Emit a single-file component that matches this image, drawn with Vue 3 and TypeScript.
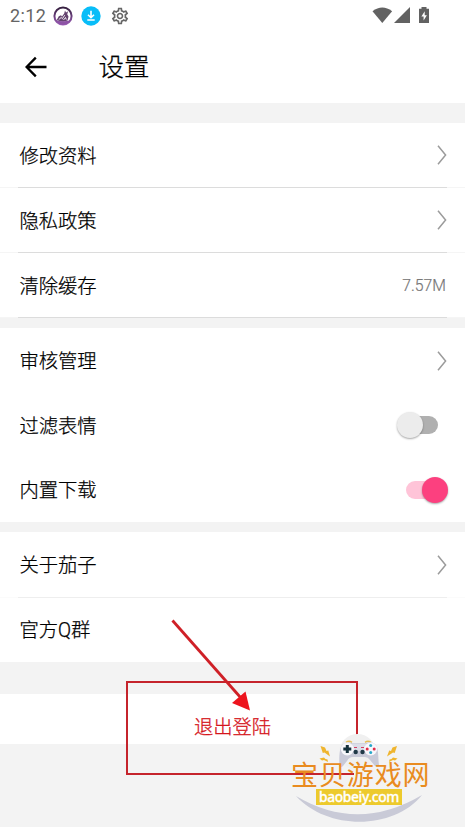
<script setup lang="ts">
import { ref } from 'vue'

interface Row {
  label: string
  kind: 'link' | 'value' | 'switch' | 'plain'
  value?: string
  on?: boolean
}
interface Group {
  name: string
  rows: Row[]
}

const groups = ref<Group[]>([
  {
    name: 'profile',
    rows: [
      { label: '修改资料', kind: 'link' },
      { label: '隐私政策', kind: 'link' },
      { label: '清除缓存', kind: 'value', value: '7.57M' },
    ],
  },
  {
    name: 'tools',
    rows: [
      { label: '审核管理', kind: 'link' },
      { label: '过滤表情', kind: 'switch', on: false },
      { label: '内置下载', kind: 'switch', on: true },
    ],
  },
  {
    name: 'about',
    rows: [
      { label: '关于茄子', kind: 'link' },
      { label: '官方Q群', kind: 'plain' },
    ],
  },
])

function toggle(row: Row) {
  if (row.kind === 'switch') row.on = !row.on
}
</script>

<template>
  <div class="screen">
    <div class="status">
      <span class="clock">2:12</span>
      <svg class="app-icon" width="20" height="20" viewBox="0 0 20 20">
        <defs>
          <linearGradient id="ring" x1="0" y1="0" x2="0" y2="1">
            <stop offset="0" stop-color="#35203f" />
            <stop offset="1" stop-color="#9a5bb5" />
          </linearGradient>
        </defs>
        <circle cx="10" cy="10" r="8.6" fill="#fff" stroke="url(#ring)" stroke-width="2" />
        <path d="M3.6 14.2 5.8 10.2 8 9.2 9 10.5 11.2 7.5 12 4.5 13 6.5 15.2 5.3 14.2 8.2 15.5 10.5 14.6 14.5 10 15.8Z" fill="#64436f" />
        <path d="m5.8 13.5 2.4-2 1.2 1.2 2.3-3.5M10.5 14l2-2.5.8 2" fill="none" stroke="#fff" stroke-width=".9" />
        <path d="M3 14.500Q10 16 17 14.500Q14 18.800 10 18.800T3 14.500Z" fill="#8d53a5" />
      </svg>
      <svg class="dl-icon" width="20" height="20" viewBox="0 0 20 20">
        <circle cx="10" cy="10" r="9.7" fill="#08bdf8" />
        <path d="M10 4.8v6.6M7 8.7l3 3 3-3M6.3 14h7.4" fill="none" stroke="#fff" stroke-width="1.6" />
      </svg>
      <svg class="gear-icon" width="20" height="20" viewBox="0 0 24 24" fill="#666">
        <path d="M19.43 12.98c.04-.32.07-.64.07-.98 0-.34-.03-.66-.07-.98l2.11-1.65c.19-.15.24-.42.12-.64l-2-3.46c-.09-.16-.26-.25-.44-.25-.06 0-.12.01-.17.03l-2.49 1c-.52-.4-1.08-.73-1.69-.98l-.38-2.65C14.46 2.18 14.25 2 14 2h-4c-.25 0-.46.18-.49.42l-.38 2.65c-.61.25-1.17.59-1.69.98l-2.49-1c-.06-.02-.12-.03-.18-.03-.17 0-.34.09-.43.25l-2 3.46c-.13.22-.07.49.12.64l2.11 1.65c-.04.32-.07.65-.07.98 0 .33.03.66.07.98l-2.11 1.65c-.19.15-.24.42-.12.64l2 3.46c.09.16.26.25.44.25.06 0 .12-.01.17-.03l2.49-1c.52.4 1.08.73 1.69.98l.38 2.65c.03.24.24.42.49.42h4c.25 0 .46-.18.49-.42l.38-2.65c.61-.25 1.17-.59 1.69-.98l2.49 1c.06.02.12.03.18.03.17 0 .34-.09.43-.25l2-3.46c.12-.22.07-.49-.12-.64l-2.11-1.65zm-1.98-1.71c.04.31.05.52.05.73 0 .21-.02.43-.05.73l-.14 1.13.89.7 1.08.84-.7 1.21-1.27-.51-1.04-.42-.9.68c-.43.32-.84.56-1.25.73l-1.06.43-.16 1.13-.2 1.35h-1.4l-.19-1.35-.16-1.13-1.06-.43c-.43-.18-.83-.41-1.23-.71l-.91-.7-1.06.43-1.27.51-.7-1.21 1.08-.84.89-.7-.14-1.13c-.03-.31-.05-.54-.05-.74s.02-.43.05-.73l.14-1.13-.89-.7-1.08-.84.7-1.21 1.27.51 1.04.42.9-.68c.43-.32.84-.56 1.25-.73l1.06-.43.16-1.13.2-1.35h1.39l.19 1.35.16 1.13 1.06.43c.43.18.83.41 1.23.71l.91.7 1.06-.43 1.27-.51.7 1.21-1.07.85-.89.7.14 1.13zM12 8c-2.21 0-4 1.79-4 4s1.79 4 4 4 4-1.79 4-4-1.79-4-4-4zm0 6c-1.1 0-2-.9-2-2s.9-2 2-2 2 .9 2 2-.9 2-2 2z" />
      </svg>
      <svg class="signal" width="60" height="18" viewBox="0 0 60 18">
        <path d="M.5 4.2Q10.300-3.300 20.100 4.200L10.300 16Z" fill="#626262" />
        <path d="M38 0v16H22Z" fill="#626262" />
        <path d="M49.500 0h5v1.700H57V16H47V1.700h2.500Z" fill="#626262" />
        <path d="m52.700 4.200-3.300 5.300h2.200v4l3.300-5.300h-2.200Z" fill="#fff" />
      </svg>
    </div>

    <header class="bar">
      <svg class="back" width="22" height="22" viewBox="0 0 22 22">
        <path d="M21.500 11H2M10.800 1.600 1.600 11l9.200 9.400" fill="none" stroke="#000" stroke-width="2.300" />
      </svg>
      <h1 class="title">设置</h1>
    </header>

    <main>
      <section v-for="g in groups" :key="g.name" class="group" :class="g.name">
        <div v-for="row in g.rows" :key="row.label" class="row" @click="toggle(row)">
          <span class="label">{{ row.label }}</span>
          <svg v-if="row.kind === 'link'" class="chevron" width="10" height="20" viewBox="0 0 10 20">
            <path d="M1 .8 8.600 10 1 19.200" fill="none" stroke="#9b9b9b" stroke-width="1.500" />
          </svg>
          <span v-else-if="row.kind === 'value'" class="value">{{ row.value }}</span>
          <span v-else-if="row.kind === 'switch'" class="switch" :class="{ on: row.on }">
            <span class="knob"></span>
          </span>
        </div>
      </section>
      <button class="logout" type="button">退出登陆</button>
    </main>

    <svg class="marks" width="465" height="827" viewBox="0 0 465 827">
      <path d="M357 736V682H127V774H354" fill="none" stroke="#c5242c" stroke-width="2" />
      <path d="M172.500 620.500 241 698" stroke="#cf2027" stroke-width="2.800" />
      <path d="m250 710.500-18-7.500 13.500-11.500Z" fill="#ed141d" />
    </svg>

    <div class="brand">
      <svg class="art" width="150" height="102" viewBox="280 725 150 102">
        <path d="M296 796Q358 833 422 795C394 830 328 831 296 796Z" fill="#c9cad7" />
        <circle cx="357.500" cy="752" r="18" fill="#f0f0f0" />
        <path d="M346 742.300q3-2 6 0M365 742.300q3-2 6 0" fill="none" stroke="#e6bd55" stroke-width="1.500" />
        <path d="M343 744q5-3 9-1h14q5-2 9 1c4 3 3 15 4 21q-1 3-4 1l-5-6q-2-3-5-3h-12q-4 0-6 4l-4 5q-2 2-3.500 0c-.5-6-.5-19 3.500-22Z" fill="#c9cad8" />
        <path d="M352 743.500h14l-1 7.500h-12Z" fill="#dcdde8" />
        <circle cx="347.300" cy="749" r="6.500" fill="#f7f7fb" />
        <circle cx="370.700" cy="749" r="6.500" fill="#f7f7fb" />
        <path d="M347.300 745v8M343.300 749h8" stroke="#16313c" stroke-width="3" />
        <circle cx="370.700" cy="745.500" r="1.500" fill="#28a8ca" />
        <circle cx="370.700" cy="752.500" r="1.500" fill="#28a8ca" />
        <circle cx="367.200" cy="749" r="1.500" fill="#e22b48" />
        <circle cx="374.200" cy="749" r="1.500" fill="#e22b48" />
        <path d="M354 747.500h3M361 747.500h3" stroke="#cf4166" stroke-width="1.200" />
        <circle cx="355.700" cy="752" r="2.200" fill="#203847" />
        <circle cx="362.500" cy="752" r="2.200" fill="#203847" />
        <g fill="#efb52e">
          <path d="m320.500 746 4.500 1.500 1.500 3.500 1.800-.5 1.700 6-5.500-4-1.700.4Z" />
          <path d="m397 746-4.500 1.500-1.500 3.500-1.800-.5-2.200 6 6-4 1.700.4Z" />
          <path d="m319.500 758.500 4.500-1 1.500 1.500 2 .5.500 2.500-4-2-2 .5Z" />
          <path d="m397.500 758.500-4.500-1-1.500 1.500-2 .5-.5 2.500 4-2 2 .5Z" />
        </g>
      </svg>
      <span class="brand-name">宝贝游戏网</span>
      <span class="brand-url">baobeiy.com</span>
    </div>
  </div>
</template>

<style>
body {
  margin: 0;
  background: #f3f3f3;
}
</style>

<style scoped>
.screen {
  position: relative;
  width: 465px;
  height: 827px;
  overflow: hidden;
  background: #f3f3f3;
  color: #000;
  font-family: Roboto, 'Noto Sans CJK SC', sans-serif;
}
.status {
  box-sizing: border-box;
  display: flex;
  align-items: center;
  height: 31px;
  padding: 0 35px 0 10px;
  background: #fff;
}
.clock {
  width: 43px;
  color: #656565;
  font-size: 18px;
  letter-spacing: 0.4px;
  line-height: 31px;
}
.dl-icon {
  margin-left: 8px;
}
.gear-icon {
  margin-left: 9px;
}
.signal {
  margin-left: auto;
  margin-right: -2px;
}
.bar {
  display: flex;
  align-items: center;
  height: 72px;
  padding-left: 25px;
  background: #fff;
}
.title {
  margin: 0 0 0 51.500px;
  font-size: 25.500px;
  font-weight: 300;
  line-height: 72px;
  -webkit-text-stroke: 0.250px #000;
}
.group {
  background: #fff;
}
.profile {
  margin-top: 20px;
}
.tools,
.about {
  margin-top: 10px;
}
.row {
  box-sizing: border-box;
  display: flex;
  align-items: center;
  justify-content: space-between;
  height: 65px;
  padding: 0 18.500px 0 19.500px;
}
.profile .row {
  border-bottom: 1px solid;
  border-image: linear-gradient(90deg, #f5f5f5 19px, #dcdcdc 19px, #dcdcdc 446px, #f5f5f5 446px) 1;
}
.tools .row:last-child,
.about .row:last-child {
  height: 64px;
}
.about .row:first-child {
  height: 66px;
  border-bottom: 1px solid;
  border-image: linear-gradient(90deg, #fbfbfb 19px, #eee 19px, #eee 446px, #fbfbfb 446px) 1;
}
.label {
  padding-top: 3px;
  font-size: 19.300px;
  font-weight: 300;
  line-height: 28px;
  -webkit-text-stroke: 0.250px #000;
}
.tools .label,
.about .label {
  padding-top: 2px;
}
.value {
  padding-top: 1px;
  margin-right: 0.500px;
  color: #777;
  font-size: 15.800px;
  font-weight: 300;
  -webkit-text-stroke: 0.200px #777;
}
.switch {
  position: relative;
  top: -1px;
  width: 36px;
  height: 18px;
  margin-right: 9px;
  border-radius: 9px;
  background: #b0b0b0;
}
.knob {
  position: absolute;
  top: -4px;
  left: -5px;
  width: 26px;
  height: 26px;
  border-radius: 50%;
  background: #ececec;
  box-shadow: 0 1px 2px rgba(0, 0, 0, 0.35);
}
.switch.on {
  top: 0;
  margin-right: 4.500px;
  background: #ffc4d8;
}
.switch.on .knob {
  left: 15.500px;
  background: #fc407f;
}
.logout {
  box-sizing: border-box;
  display: block;
  width: 100%;
  height: 50px;
  margin-top: 32px;
  padding: 18px 0 0;
  border: 0;
  background: #fff;
  color: #d5151b;
  font: 300 19.300px/30px Roboto, 'Noto Sans CJK SC', sans-serif;
  text-align: center;
  -webkit-text-stroke: 0.300px #d5151b;
}
.marks {
  position: absolute;
  inset: 0;
  pointer-events: none;
}
.brand {
  position: absolute;
  left: 280px;
  top: 725px;
  width: 160px;
  height: 102px;
  pointer-events: none;
}
.art {
  position: absolute;
  left: 0;
  top: 0;
}
.brand-name {
  position: absolute;
  left: 11px;
  top: 38px;
  color: #e98b20;
  font-size: 27px;
  font-weight: 400;
  letter-spacing: 0.900px;
  line-height: 27px;
  white-space: nowrap;
}
.brand-url {
  box-sizing: border-box;
  position: absolute;
  left: 36px;
  top: 64px;
  width: 86px;
  height: 16px;
  background: #edca2d;
  color: #fff;
  font-family: 'Noto Sans', sans-serif;
  font-size: 13.800px;
  font-weight: 500;
  letter-spacing: -0.350px;
  line-height: 16px;
  text-align: center;
  -webkit-text-stroke: 0.300px #fff;
}
</style>
